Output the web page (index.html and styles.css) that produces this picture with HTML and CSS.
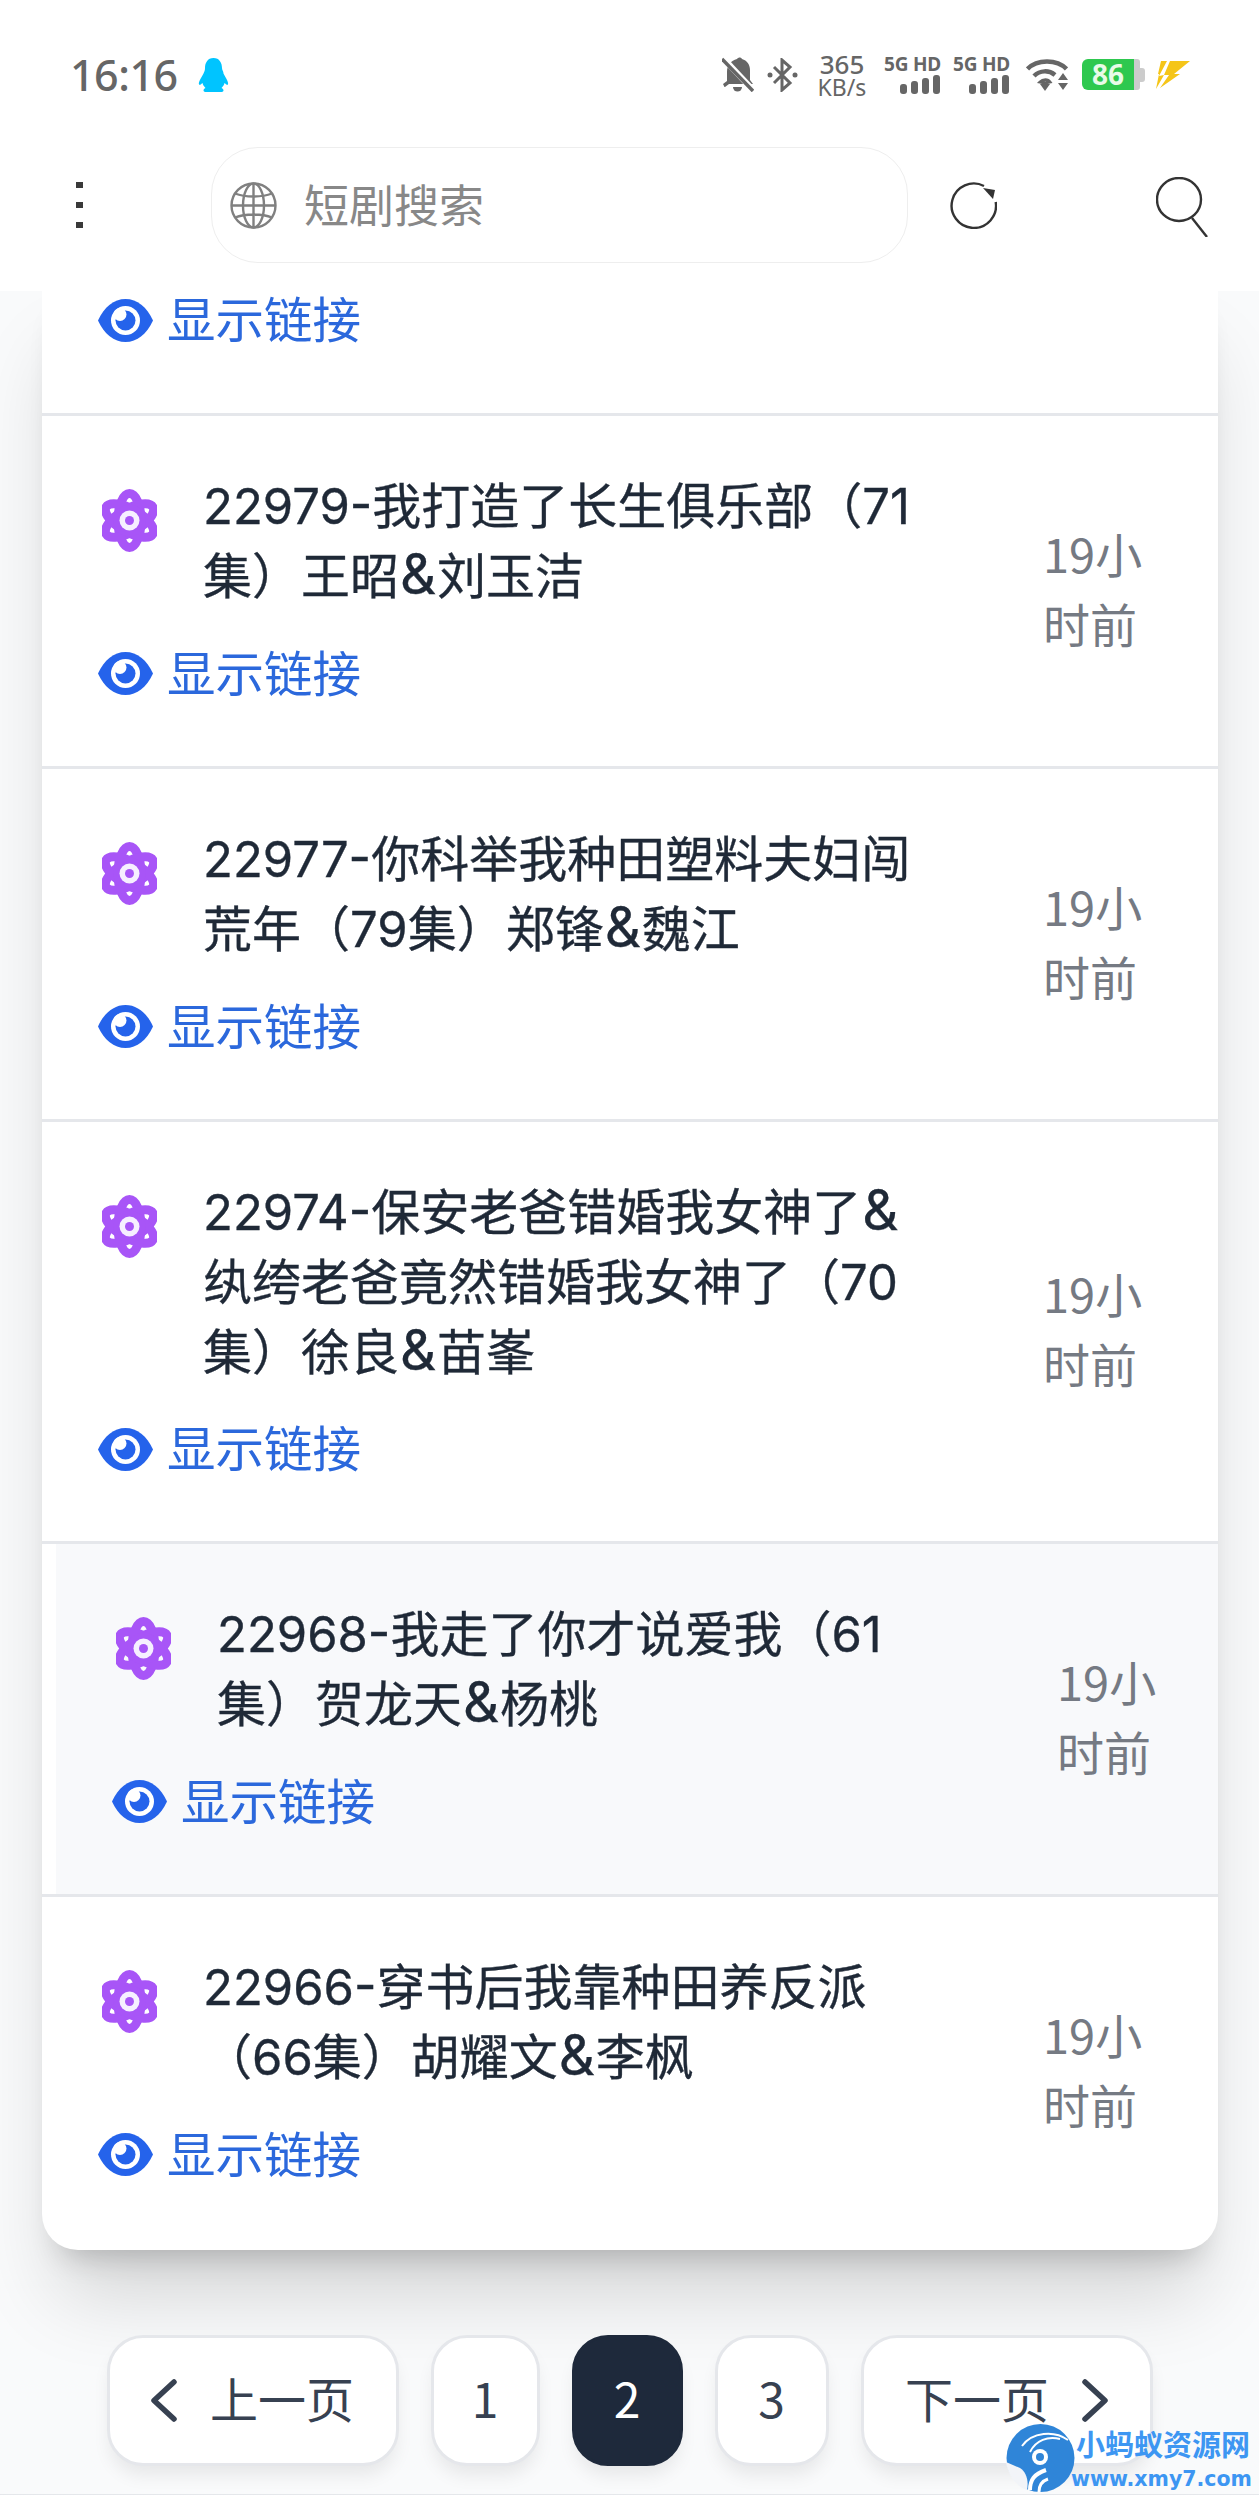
FILE: index.html
```html
<!DOCTYPE html>
<html lang="zh">
<head>
  <meta charset="UTF-8">
  <meta name="viewport" content="width=device-width, initial-scale=1.0">
  <title>短剧搜索</title>
  <link rel="stylesheet" href="styles.css">
</head>
<body>
  <svg class="defs" width="0" height="0">
    <symbol id="atom" viewBox="0 0 55 63">
      <g fill="none" stroke="#a855f7" stroke-width="9">
        <ellipse cx="27.5" cy="31.5" rx="11.500" ry="27"/>
        <ellipse cx="27.5" cy="31.5" rx="11.500" ry="27" transform="rotate(60 27.5 31.5)"/>
        <ellipse cx="27.5" cy="31.5" rx="11.500" ry="27" transform="rotate(120 27.5 31.5)"/>
      </g>
      <circle cx="27.5" cy="31.5" r="16" fill="#a855f7"/>
      <circle cx="27.5" cy="31.5" r="10" fill="#f6efff"/>
      <circle cx="27.5" cy="31.5" r="4.500" fill="#a855f7"/>
    </symbol>
    <symbol id="eye" viewBox="0 0 55 43">
      <path d="M0 21.5C6 8 16 0 27.5 0S49 8 55 21.5C49 35 39 43 27.5 43S6 35 0 21.5Z" fill="#2563eb"/>
      <circle cx="27.5" cy="21.5" r="14.500" fill="#fff"/>
      <circle cx="27.5" cy="21.5" r="10" fill="#2563eb"/>
      <circle cx="22" cy="15.5" r="6.500" fill="#fff"/>
    </symbol>
  </svg>

  <header class="top">
    <div class="status">
      <span class="clock">16:16</span>
      <svg class="qq" width="31" height="34" viewBox="0 0 31 34"><path d="M15.500 0C9.500 0 7 5 7 10c0 2-.5 3.500-1.500 5.500C4 18.500 0 24 1 26.500c.5 1 2.500-.5 3.500-1.500.5 2 1.500 3.500 3 5-1.500.8-2 1.500-2 2.500 0 1 1.500 1.500 3 1.500h14c1.500 0 3-.5 3-1.500 0-1-.5-1.700-2-2.500 1.500-1.500 2.500-3 3-5 1 1 3 2.500 3.500 1.500 1-2.500-3-8-4.500-11C25.500 13.500 24 12 24 10c0-5-2.500-10-8.500-10Z" fill="#00c4ff"/></svg>
      <div class="status-right">
        <svg class="bell" width="32" height="35" viewBox="0 0 32 35"><path d="M15 2c1.500-2 4-2 5 0 5 1.500 8 5.500 8 11v10l3 4H7L3 30h-.5L1 27l4-3V15C5 8 9 3.500 15 2Z" fill="#666"/><path d="M11 30h9a4.500 4.500 0 0 1-9 0Z" fill="#666"/><path d="M1 1l30 32" stroke="#fff" stroke-width="6"/><path d="M0 2l31 32" stroke="#666" stroke-width="3.500"/></svg>
        <svg class="bt" width="31" height="34" viewBox="0 0 31 34"><path d="M7 9l16 16-8 7V2l8 7L7 25" fill="none" stroke="#666" stroke-width="3"/><circle cx="3" cy="17" r="2.500" fill="#666"/><circle cx="28" cy="17" r="2.500" fill="#666"/></svg>
        <div class="speed"><span class="speed-num">365</span><span class="speed-unit">KB/s</span></div>
        <div class="sim">
          <span class="sim-label">5G HD</span>
          <svg class="sim-bars" width="41" height="19" viewBox="0 0 41 19"><rect x="0" y="9" width="7" height="10" rx="3" fill="#666"/><rect x="11" y="6" width="7" height="13" rx="3" fill="#666"/><rect x="22" y="3" width="7" height="16" rx="3" fill="#666"/><rect x="33" y="0" width="7" height="19" rx="3" fill="#666"/></svg>
        </div>
        <div class="sim sim-2">
          <span class="sim-label">5G HD</span>
          <svg class="sim-bars" width="41" height="19" viewBox="0 0 41 19"><rect x="0" y="9" width="7" height="10" rx="3" fill="#666"/><rect x="11" y="6" width="7" height="13" rx="3" fill="#666"/><rect x="22" y="3" width="7" height="16" rx="3" fill="#666"/><rect x="33" y="0" width="7" height="19" rx="3" fill="#666"/></svg>
        </div>
        <svg class="wifi" width="42" height="33" viewBox="0 0 42 33"><g fill="none" stroke="#666" stroke-width="4.500"><path d="M1.500 11C11 1 31 1 40.500 11"/><path d="M8 18c6-6 15-6 21-1"/></g><path d="M14 24c3-3 8-3 10 0l-5 1Z" fill="none" stroke="#666" stroke-width="3"/><path d="M14 26h10l-5 7Z" fill="#666"/><path d="M37 15l5 7H32ZM32 25h10l-5 7Z" fill="#666"/></svg>
        <div class="battery"><span class="battery-fill">86</span><span class="battery-rest"></span><span class="battery-cap"></span></div>
        <svg class="bolt" width="34" height="28" viewBox="0 0 34 28"><path d="M5 0h6L3 15l5-1-8 14L3 13l-1 0ZM14 0h20L18 13l6 0L4 27l9-13H8Z" fill="#f5c518"/></svg>
      </div>
    </div>
    <nav class="nav">
      <span class="dots"><i></i><i></i><i></i></span>
      <div class="search-box">
        <svg class="globe" width="47" height="47" viewBox="0 0 47 47"><g fill="none" stroke="#808080" stroke-width="2.400"><circle cx="23.500" cy="23.500" r="22"/><ellipse cx="23.500" cy="23.500" rx="10.500" ry="22"/><path d="M23.500 1.500v44M1.500 23.500h44M5 11.500c10 4 27 4 37 0M5 35.500c10-4 27-4 37 0"/></g></svg>
        <span class="placeholder">短剧搜索</span>
      </div>
      <svg class="refresh" width="47" height="47" viewBox="0 0 47 47"><path d="M45.700 20A22.200 22.200 0 1 1 34 4" fill="none" stroke="#333" stroke-width="2.400"/><path d="M33 6l12 2-2 9Z" fill="#333"/></svg>
      <svg class="find" width="52" height="60" viewBox="0 0 52 60"><ellipse cx="23" cy="22.500" rx="22" ry="21.500" fill="none" stroke="#333" stroke-width="2.400"/><path d="M36 41l15 19" stroke="#333" stroke-width="2.400"/></svg>
    </nav>
  </header>

  <main class="card">
    <div class="row row-cut">
      <div class="row-main">
        <a class="link"><svg class="eye"><use href="#eye"/></svg><span class="link-text">显示链接</span></a>
      </div>
    </div>
    <div class="row">
      <div class="row-main">
        <div class="head"><svg class="atom"><use href="#atom"/></svg><p class="name">22979-我打造了长生俱乐部（71<br>集）王昭<span class="amp">&amp;</span>刘玉洁</p></div>
        <a class="link"><svg class="eye"><use href="#eye"/></svg><span class="link-text">显示链接</span></a>
      </div>
      <span class="ago">19小<br>时前</span>
    </div>
    <div class="row">
      <div class="row-main">
        <div class="head"><svg class="atom"><use href="#atom"/></svg><p class="name">22977-你科举我种田塑料夫妇闯<br>荒年（79集）郑锋<span class="amp">&amp;</span>魏江</p></div>
        <a class="link"><svg class="eye"><use href="#eye"/></svg><span class="link-text">显示链接</span></a>
      </div>
      <span class="ago">19小<br>时前</span>
    </div>
    <div class="row">
      <div class="row-main">
        <div class="head"><svg class="atom"><use href="#atom"/></svg><p class="name">22974-保安老爸错婚我女神了<span class="amp">&amp;</span><br>纨绔老爸竟然错婚我女神了（70<br>集）徐良<span class="amp">&amp;</span>苗峯</p></div>
        <a class="link"><svg class="eye"><use href="#eye"/></svg><span class="link-text">显示链接</span></a>
      </div>
      <span class="ago">19小<br>时前</span>
    </div>
    <div class="row row-on">
      <div class="row-main">
        <div class="head"><svg class="atom"><use href="#atom"/></svg><p class="name">22968-我走了你才说爱我（61<br>集）贺龙天<span class="amp">&amp;</span>杨桃</p></div>
        <a class="link"><svg class="eye"><use href="#eye"/></svg><span class="link-text">显示链接</span></a>
      </div>
      <span class="ago">19小<br>时前</span>
    </div>
    <div class="row row-last">
      <div class="row-main">
        <div class="head"><svg class="atom"><use href="#atom"/></svg><p class="name">22966-穿书后我靠种田养反派<br>（66集）胡耀文<span class="amp">&amp;</span>李枫</p></div>
        <a class="link"><svg class="eye"><use href="#eye"/></svg><span class="link-text">显示链接</span></a>
      </div>
      <span class="ago">19小<br>时前</span>
    </div>
  </main>

  <div class="pager">
    <a class="page page-wide"><svg class="chev" width="26" height="43" viewBox="0 0 26 43"><path d="M23 3L3 21.500 23 40" fill="none" stroke="#374151" stroke-width="5.500" stroke-linecap="round" stroke-linejoin="round"/></svg><span class="page-text">上一页</span></a>
    <a class="page page-1"><span class="page-text">1</span></a>
    <a class="page page-2 page-now"><span class="page-text">2</span></a>
    <a class="page page-3"><span class="page-text">3</span></a>
    <a class="page page-wide"><span class="page-text">下一页</span><svg class="chev" width="26" height="43" viewBox="0 0 26 43"><path d="M3 3L23 21.500 3 40" fill="none" stroke="#374151" stroke-width="5.500" stroke-linecap="round" stroke-linejoin="round"/></svg></a>
  </div>

  <footer class="foot"></footer>

  <div class="mark">
    <svg class="mark-logo" width="69" height="68" viewBox="0 0 69 68"><circle cx="34.500" cy="34" r="34" fill="#2f85d8"/><path d="M0 38L14 44C20 48 23 56 21 66C9 62 2 50 0 38Z" fill="#f2f4f8"/><g fill="none" stroke="#fff"><path d="M16 22C26 8 48 6 62 16" stroke-width="2"/><path d="M24 28C30 16 42 12 54 15" stroke-width="2"/><path d="M24 66C24 56 28 50 40 46" stroke-width="4"/><path d="M33 68C33 62 36 57 42 55" stroke-width="3"/></g><circle cx="34" cy="33" r="8" fill="#fff"/><circle cx="34" cy="33" r="4" fill="#2f85d8"/></svg>
    <div class="mark-text"><b class="mark-name">小蚂蚁资源网</b><b class="mark-url">www.xmy7.com</b></div>
  </div>
</body>
</html>
```

FILE: styles.css
```css
*{box-sizing:border-box;}
html,body{margin:0;padding:0;}
body{width:1259px;height:2510px;overflow:hidden;position:relative;background:#f9fafb;font-family:"Noto Sans CJK SC","Noto Sans",sans-serif;color:#1f2937;}
.defs{position:absolute;}
a{display:flex;}

.top{position:relative;z-index:2;height:291px;background:#fff;}
.status{height:147px;padding:2px 69px 0 70px;display:flex;align-items:center;color:#666;}
.clock{font-family:"Noto Sans",sans-serif;font-size:43px;font-weight:500;line-height:50px;letter-spacing:-.5px;}
.qq{margin-left:20px;}
.status-right{margin-left:auto;display:flex;align-items:center;}
.bt{margin-left:13px;}
.speed{margin-left:19px;width:50px;display:flex;flex-direction:column;align-items:center;font-family:"Noto Sans",sans-serif;font-weight:500;}
.speed-num{font-size:26px;line-height:25px;}
.speed-unit{font-size:23px;line-height:20px;font-weight:400;}
.sim{margin-left:16px;width:58px;display:flex;flex-direction:column;align-items:flex-end;}
.sim-2{margin-left:11px;}
.sim-label{font-family:"Noto Sans",sans-serif;font-size:19px;font-weight:700;line-height:18px;letter-spacing:-.2px;white-space:nowrap;}
.sim-bars{margin-top:2px;}
.wifi{margin-left:16px;}
.battery{margin-left:14px;width:63px;height:31px;display:flex;align-items:center;}
.battery-fill{width:52px;height:31px;background:#2ec84f;border-radius:6px 0 0 6px;color:#e8fbe9;font-family:"Noto Sans",sans-serif;font-size:28px;font-weight:700;line-height:31px;text-align:center;}
.battery-rest{width:6px;height:31px;background:#ccc;border-radius:0 3px 3px 0;}
.battery-cap{width:5px;height:14px;background:#ccc;border-radius:0 3px 3px 0;}
.bolt{margin-left:11px;}

.nav{padding-left:76px;display:flex;align-items:center;}
.dots{width:7px;display:flex;flex-direction:column;gap:14px;}
.dots i{display:block;width:7px;height:6px;background:#3a3a3a;}
.search-box{margin-left:128px;width:697px;height:116px;border:1px solid #eee;border-radius:47px;padding-left:18px;display:flex;align-items:center;background:#fff;}
.placeholder{margin-left:27px;font-size:45px;line-height:60px;padding-bottom:2px;color:#888;}
.refresh{margin-left:42px;}
.find{margin-left:159px;margin-top:4px;}

.card{position:relative;z-index:1;width:1176px;margin:-10px 0 0 42px;background:#fff;border-radius:0 0 36px 36px;box-shadow:0 60px 80px -15px rgba(0,0,0,.15),0 24px 30px -18px rgba(0,0,0,.2);overflow:hidden;}
.row{display:flex;align-items:center;padding:56px 75px 56px 56px;border-bottom:3px solid #e5e7eb;}
.row-cut{height:135.3px;padding-top:0;padding-bottom:0;align-items:flex-start;}
.row-cut .link{margin-top:3px;}
.row-on{padding-left:70px;padding-right:61px;background:linear-gradient(90deg,#fff 14px,#f8f9fb 14px);}
.row-last{border-bottom:0;padding-bottom:59px;}
.row-main{flex:1;min-width:0;}
.head{display:flex;align-items:flex-start;}
.atom{width:55px;height:63px;margin:17px 0 0 4px;flex:none;}
.name{margin:0 0 0 46px;font-family:Inter,"Noto Sans CJK SC",sans-serif;font-size:49px;line-height:70.125px;font-weight:400;-webkit-text-stroke:.35px #1f2937;white-space:nowrap;color:#1f2937;}
.amp{margin:0 1px;font-size:56px;line-height:0;}
.link{margin-top:25.4px;height:72px;align-items:center;font-size:48.500px;color:#2b68dc;}
.link-text{line-height:64px;padding-bottom:6px;}
.eye{width:55px;height:43px;margin-right:14px;flex:none;}
.ago{width:100px;flex:none;font-size:47px;line-height:70px;padding-bottom:6px;color:#757a83;white-space:nowrap;}

.pager{position:relative;z-index:1;margin-top:85px;height:131px;display:flex;justify-content:center;gap:32px;}
.page{height:131px;background:#fff;border:3px solid #e5e7eb;border-radius:36px;box-shadow:0 12px 18px -3px rgba(0,0,0,.08);align-items:center;justify-content:center;font-size:48px;color:#374151;}
.page-text{line-height:64px;padding-bottom:7px;}
.page-wide{width:292px;gap:33px;}
.page-1{width:109px;}
.page-2{width:111px;}
.page-3{width:114px;}
.page-now{background:#1e293b;border-color:#1e293b;color:#fff;}

.foot{position:relative;z-index:1;margin-top:28px;height:18px;background:#fff;border-top:1px solid #e5e7eb;}

.mark{position:absolute;z-index:3;left:1006px;top:2424px;display:flex;}
.mark-text{display:flex;flex-direction:column;margin-left:-1px;}
.mark-name{margin-left:2px;font-size:29px;line-height:38px;color:#3d96f2;white-space:nowrap;}
.mark-url{margin-top:4px;margin-left:-3px;font-family:"DejaVu Sans",sans-serif;font-size:20.500px;line-height:26px;color:#3d96f2;white-space:nowrap;}
```
